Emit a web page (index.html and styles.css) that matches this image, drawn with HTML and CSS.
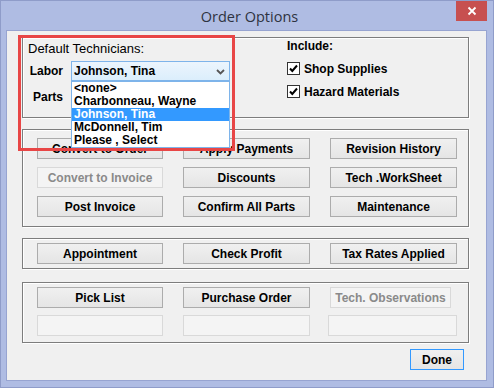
FILE: index.html
```html
<!DOCTYPE html>
<html>
<head>
<meta charset="utf-8">
<title>Order Options</title>
<link rel="stylesheet" href="styles.css">
</head>
<body>
<div class="window">
  <div class="titlebar">
    <span class="title">Order Options</span>
    <div class="close"><svg width="10" height="10" viewBox="0 0 10 10"><path d="M1.5 1.5 L8.5 8.5 M8.5 1.5 L1.5 8.5" stroke="#fff" stroke-width="1.8" fill="none"/></svg></div>
  </div>
  <div class="client">
    <div class="group g1">
      <div class="techs">
        <div class="caption">Default Technicians:</div>
        <div class="field">
          <span class="lbl">Labor</span>
          <div class="combo-wrap">
            <div class="combo open"><span>Johnson, Tina</span><svg class="chev" width="9" height="6" viewBox="0 0 9 6"><path d="M1 1 L4.5 4.5 L8 1" stroke="#555" stroke-width="1.8" fill="none"/></svg></div>
            <ul class="droplist">
              <li>&lt;none&gt;</li>
              <li>Charbonneau, Wayne</li>
              <li class="sel">Johnson, Tina</li>
              <li>McDonnell, Tim</li>
              <li>Please , Select</li>
            </ul>
          </div>
        </div>
        <div class="field parts">
          <span class="lbl">Parts</span>
          <div class="combo"></div>
        </div>
      </div>
      <div class="include">
        <div class="caption b">Include:</div>
        <div class="check first"><span class="box"><svg width="11" height="11" viewBox="0 0 11 11"><path d="M2 5.5 L4.3 8 L9 2.5" stroke="#000" stroke-width="2" fill="none"/></svg></span>Shop Supplies</div>
        <div class="check second"><span class="box"><svg width="11" height="11" viewBox="0 0 11 11"><path d="M2 5.5 L4.3 8 L9 2.5" stroke="#000" stroke-width="2" fill="none"/></svg></span>Hazard Materials</div>
      </div>
    </div>

    <div class="group g2 grid">
      <div class="btn">Convert to Order</div>
      <div class="btn">Apply Payments</div>
      <div class="btn">Revision History</div>
      <div class="btn disabled">Convert to Invoice</div>
      <div class="btn">Discounts</div>
      <div class="btn">Tech .WorkSheet</div>
      <div class="btn">Post Invoice</div>
      <div class="btn">Confirm All Parts</div>
      <div class="btn">Maintenance</div>
    </div>

    <div class="group g3 grid">
      <div class="btn">Appointment</div>
      <div class="btn">Check Profit</div>
      <div class="btn">Tax Rates Applied</div>
    </div>

    <div class="group g4 grid">
      <div class="btn">Pick List</div>
      <div class="btn">Purchase Order</div>
      <div class="btn disabled narrow">Tech. Observations</div>
      <div class="btn disabled"></div>
      <div class="btn disabled"></div>
      <div class="btn disabled shift"></div>
    </div>

    <div class="footer">
      <div class="btn done">Done</div>
    </div>
  </div>
  <div class="redbox"></div>
</div>
</body>
</html>
```
FILE: styles.css
```css
* { box-sizing: border-box; }
html, body { margin: 0; padding: 0; }
body {
  background: #afbce3;
  font-family: "Liberation Sans", Arial, sans-serif;
  font-size: 12px;
  font-weight: bold;
  color: #000;
}
.window {
  position: relative;
  width: 494px;
  height: 388px;
  border: 1px solid #8f9cc9;
  background: #afbce3;
  display: flex;
  flex-direction: column;
}
.titlebar {
  height: 29px;
  display: flex;
  justify-content: center;
  align-items: center;
  flex: none;
}
.title {
  font-family: "Open Sans", "Noto Sans", sans-serif;
  font-weight: normal;
  font-size: 14.5px;
  color: #2e3340;
  margin-top: 2px;
  margin-left: 5px;
}
.close {
  position: absolute;
  left: 455px;
  top: 0;
  width: 31px;
  height: 20px;
  background: #c75050;
  display: flex;
  align-items: center;
  justify-content: center;
}
.client {
  margin: 0 6px 0 5px;
  height: 351px;
  border: 1px solid #97a4d1;
  background: #f0f0f0;
  display: flex;
  flex-direction: column;
}
.group {
  margin-left: 15px;
  width: 447px;
  border: 1px solid #7d7d7d;
  box-shadow: inset 1px 1px 0 #fff, 1px 1px 0 #fff;
}
.g1 {
  margin-top: 6px;
  height: 81px;
  display: flex;
}
.techs {
  width: 264px;
  padding: 3px 0 0 5px;
  display: flex;
  flex-direction: column;
}
.caption {
  font-weight: normal;
  font-size: 13px;
  line-height: 15px;
  height: 15px;
}
.caption.b {
  font-weight: bold;
  font-size: 12px;
}
.field {
  display: flex;
  align-items: center;
  margin-top: 5px;
  height: 20px;
}
.field.parts { margin-top: 6px; }
.lbl {
  width: 35px;
  text-align: right;
  margin-right: 8px;
}
.combo-wrap { position: relative; }
.combo {
  width: 159px;
  height: 20px;
  border: 1px solid #aaa;
  background: linear-gradient(#f2f2f2, #e4e4e4);
  display: flex;
  align-items: center;
  padding-left: 2px;
  position: relative;
}
.combo.open {
  border-color: #7eb4ea;
  background: linear-gradient(#ecf5fd, #dbeefc);
}
.chev {
  position: absolute;
  right: 4px;
  top: 7px;
}
.droplist {
  position: absolute;
  left: 0;
  top: 20px;
  width: 159px;
  margin: 0;
  padding: 0;
  list-style: none;
  background: #fff;
  border: 1px solid #7eb4ea;
  z-index: 2;
}
.droplist li {
  height: 13px;
  line-height: 13px;
  padding-left: 2px;
  white-space: nowrap;
}
.droplist li.sel {
  background: #3399ff;
  color: #fff;
}
.include {
  padding-top: 1px;
  display: flex;
  flex-direction: column;
}
.check {
  display: flex;
  align-items: center;
  height: 13px;
}
.check.first { margin-top: 8px; }
.check.second { margin-top: 10px; }
.box {
  width: 13px;
  height: 13px;
  border: 1px solid #333;
  background: #fff;
  margin-right: 4px;
  display: flex;
  align-items: center;
  justify-content: center;
}
.grid {
  display: grid;
  grid-template-columns: 126px 127px 127px;
  grid-auto-rows: 21px;
  column-gap: 20px;
  padding-left: 14px;
}
.g2 {
  margin-top: 11px;
  height: 98px;
  padding-top: 8px;
  row-gap: 8px;
}
.g3 {
  margin-top: 11px;
  height: 31px;
  padding-top: 4px;
}
.g4 {
  margin-top: 13px;
  height: 61px;
  padding-top: 4px;
  row-gap: 7px;
}
.btn {
  height: 21px;
  border: 1px solid #acacac;
  background: linear-gradient(#f0f0f0, #e5e5e5);
  display: flex;
  align-items: center;
  justify-content: center;
  white-space: nowrap;
}
.btn.disabled {
  border-color: #d9d9d9;
  background: #f4f4f4;
  color: #8a8a8a;
}
.btn.narrow { width: 121px; }
.btn.shift { margin-left: -2px; }
.footer {
  display: flex;
  justify-content: flex-end;
  margin-top: 6px;
  padding-right: 22px;
}
.btn.done {
  width: 54px;
  border-color: #3399ff;
}
.redbox {
  position: absolute;
  left: 17px;
  top: 34px;
  width: 217px;
  height: 116px;
  border: 3px solid #e84646;
  z-index: 3;
}
```
